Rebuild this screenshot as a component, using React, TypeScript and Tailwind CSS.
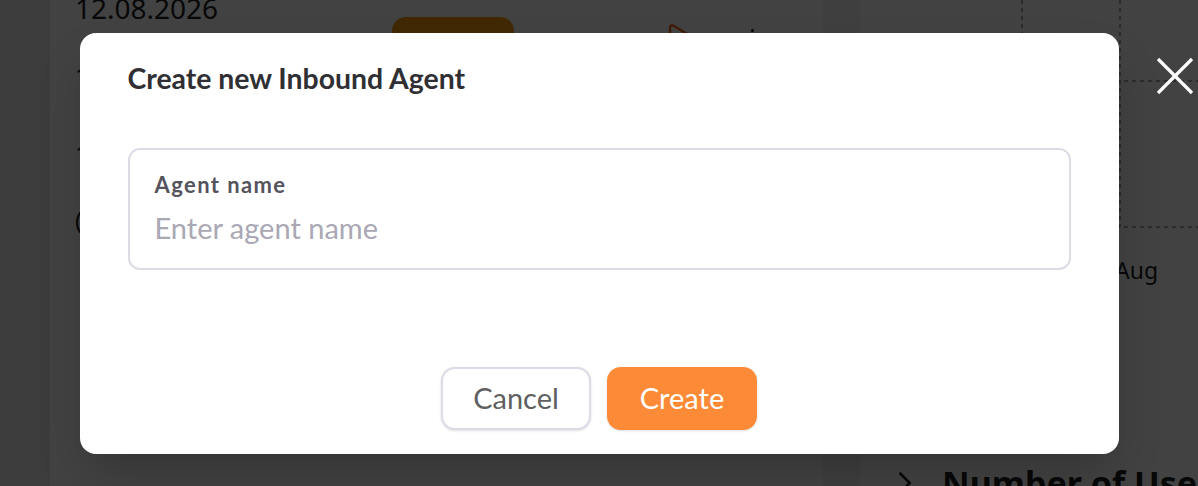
import { ChevronRight } from 'lucide-react';

function BackgroundPage() {
  return (
    <div className="flex h-full font-['Noto_Sans',sans-serif]">
      <div className="w-[50px] bg-[#e9e9e9]" />
      <div className="w-[773px] bg-white pl-[25px]">
        <div className="flex items-start">
          <div className="w-[317px] -mt-[10px] text-[28px] leading-[36px] text-[#222]">12.08.2026</div>
          <div className="mt-[17px] h-[30px] w-[122px] rounded-[14px] bg-[#f5a00a]" />
          <svg className="ml-[154px] mt-[24px]" width="30" height="24" viewBox="0 0 30 24" fill="none">
            <path d="M2 22 L2 4 Q2 0 6 2 L26 14" stroke="#f26a1b" strokeWidth="2.5" strokeLinecap="round" />
          </svg>
          <div className="ml-[53px] mt-[29px] h-[3px] w-[3px] rounded-full bg-black" />
        </div>
        <div className="mt-[13px] text-[24px] leading-[30px] text-[#222]">14:20</div>
        <div className="mt-[48px] text-[24px] leading-[30px] text-[#222]">15:45</div>
        <div className="mt-[36px] text-[24px] leading-[30px] text-[#222]">(2)</div>
      </div>
      <div className="w-[37px] bg-[#f2f2f2]" />
      <div className="flex flex-1 flex-col overflow-hidden bg-white">
        <div className="relative h-[254px] shrink-0">
          <svg className="absolute inset-0" width="338" height="254">
            <line x1="162" y1="0" x2="162" y2="81" stroke="#555" strokeDasharray="4 4" />
            <line x1="260" y1="0" x2="260" y2="227" stroke="#555" strokeDasharray="4 4" />
            <line x1="0" y1="81" x2="338" y2="81" stroke="#555" strokeDasharray="4 4" />
            <line x1="0" y1="227" x2="338" y2="227" stroke="#555" strokeDasharray="4 4" />
          </svg>
        </div>
        <div className="shrink-0 pl-[255px] text-[23px] leading-[32px] text-[#222]">Aug</div>
        <div className="mt-[152px] h-px shrink-0 bg-[#f7f7f7]" />
        <div className="mt-[25px] flex shrink-0 items-center gap-[18px] pl-[26px] text-[34px] font-bold text-[#222]">
          <ChevronRight className="shrink-0" size={38} strokeWidth={1.6} />
          <span className="whitespace-nowrap leading-[36px]">Number of Users</span>
        </div>
      </div>
    </div>
  );
}

export default function App() {
  return (
    <div className="relative h-[486px] w-[1198px] overflow-hidden bg-[#f2f2f2]">
      <BackgroundPage />
      <div className="absolute inset-0 flex items-center justify-center bg-black/[0.74] font-['Lato',sans-serif]">
        <div className="flex h-[421px] w-[1039px] flex-col rounded-[16px] bg-white px-12 pb-6 pt-[28px] shadow-2xl">
          <h2 className="text-[28.4px] font-bold leading-[34px] text-[#2f2f34]">Create new Inbound Agent</h2>
          <div className="mt-[53px] flex h-[122px] flex-col justify-center rounded-[12px] border-2 border-[#dcdbe6] px-[25px]">
            <label className="text-[22px] font-bold leading-[28px] tracking-[1.4px] text-[#55545d]">Agent name</label>
            <input
              className="mt-[11px] w-full bg-transparent text-[29px] leading-[36px] text-[#2f2f34] outline-none placeholder:text-[#a9a8b4]"
              placeholder="Enter agent name"
            />
          </div>
          <div className="mt-auto flex justify-center gap-4">
            <button className="h-[63px] w-[150px] rounded-[14px] border-2 border-[#dcdbe6] bg-white text-[29px] text-[#606060] shadow-sm">
              Cancel
            </button>
            <button className="h-[63px] w-[150px] rounded-[14px] bg-[#fd8a37] text-[29px] text-white shadow-sm">
              Create
            </button>
          </div>
        </div>
        <button className="absolute left-[1155px] top-[56px] text-white">
          <svg width="40" height="40" viewBox="0 0 40 40" fill="none" stroke="currentColor" strokeWidth="3.2">
            <line x1="3" y1="3" x2="37" y2="37" />
            <line x1="37" y1="3" x2="3" y2="37" />
          </svg>
        </button>
      </div>
    </div>
  );
}
